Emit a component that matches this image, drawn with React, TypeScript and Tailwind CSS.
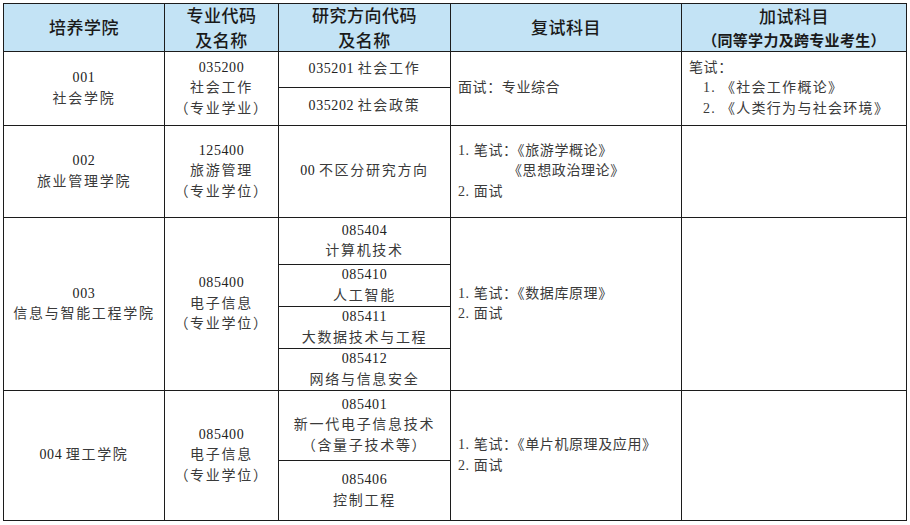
import type { ReactNode } from 'react';

const body = "font-['Liberation_Serif','Noto_Sans_CJK_SC',serif] text-[14px] leading-[20.5px] text-[#3a3a3a]";

// CJK text is letter-spaced in the source; digits are not
function Cn({ children }: { children: ReactNode }) {
  return <span className="tracking-[1.7px]">{children}</span>;
}

function Num({ children }: { children: ReactNode }) {
  return <span className="tracking-[0.6px] text-[#222]">{children}</span>;
}

function Head({ children }: { children: ReactNode }) {
  return (
    <div className="bg-[#c3e3f5] flex flex-col items-center justify-center text-[17px] leading-[24.6px] tracking-[0.5px] font-medium text-[#1a1a1a] font-['Noto_Sans_CJK_SC',sans-serif]">
      {children}
    </div>
  );
}

function Center({ children, className = '' }: { children: ReactNode; className?: string }) {
  return (
    <div className={`bg-white flex flex-col items-center justify-center text-center ${body} ${className}`}>
      {children}
    </div>
  );
}

function Left({ children }: { children: ReactNode }) {
  return <div className={`bg-white flex flex-col justify-center pl-[7px] ${body}`}>{children}</div>;
}

export default function App() {
  return (
    <div className="w-[910px] h-[525px] bg-white pt-[3px] pl-[3px]">
      <div className="w-[904px] grid grid-cols-[160px_113px_171px_230px_224px] grid-rows-[47px_73px_91px_172px_129px] gap-px p-px bg-[#1c1c1c]">
        {/* header */}
        <Head>培养学院</Head>
        <Head>
          <span>专业代码</span>
          <span>及名称</span>
        </Head>
        <Head>
          <span>研究方向代码</span>
          <span>及名称</span>
        </Head>
        <Head>复试科目</Head>
        <Head>
          <span>加试科目</span>
          <span className="text-[15px] font-bold leading-[21.5px] tracking-[0.3px]">（同等学力及跨专业考生）</span>
        </Head>

        {/* 001 */}
        <Center>
          <Num>001</Num>
          <Cn>社会学院</Cn>
        </Center>
        <Center>
          <Num>035200</Num>
          <Cn>社会工作</Cn>
          <Cn>（专业学业）</Cn>
        </Center>
        <div className="flex flex-col gap-px">
          <Center className="h-[35px]">
            <div>
              <Num>035201</Num> <Cn>社会工作</Cn>
            </div>
          </Center>
          <Center className="flex-1">
            <div>
              <Num>035202</Num> <Cn>社会政策</Cn>
            </div>
          </Center>
        </div>
        <Left>
          <span className="tracking-[0.6px]">面试：专业综合</span>
        </Left>
        <Left>
          <span className="tracking-[0.6px]">笔试：</span>
          <span className="pl-[14px] tracking-[1.3px]">1. 《社会工作概论》</span>
          <span className="pl-[14px] tracking-[1.3px]">2. 《人类行为与社会环境》</span>
        </Left>

        {/* 002 */}
        <Center>
          <Num>002</Num>
          <Cn>旅业管理学院</Cn>
        </Center>
        <Center>
          <Num>125400</Num>
          <Cn>旅游管理</Cn>
          <Cn>（专业学位）</Cn>
        </Center>
        <Center>
          <div>
            <Num>00</Num> <Cn>不区分研究方向</Cn>
          </div>
        </Center>
        <Left>
          <span className="tracking-[0.6px]">1. 笔试：《旅游学概论》</span>
          <span className="pl-[50px] tracking-[0.6px]">《思想政治理论》</span>
          <span className="tracking-[0.6px]">2. 面试</span>
        </Left>
        <div className="bg-white" />

        {/* 003 */}
        <Center>
          <Num>003</Num>
          <Cn>信息与智能工程学院</Cn>
        </Center>
        <Center>
          <Num>085400</Num>
          <Cn>电子信息</Cn>
          <Cn>（专业学位）</Cn>
        </Center>
        <div className="flex flex-col gap-px">
          <Center className="h-[46px]">
            <Num>085404</Num>
            <Cn>计算机技术</Cn>
          </Center>
          <Center className="h-[41px]">
            <Num>085410</Num>
            <Cn>人工智能</Cn>
          </Center>
          <Center className="h-[41px]">
            <Num>085411</Num>
            <Cn>大数据技术与工程</Cn>
          </Center>
          <Center className="flex-1">
            <Num>085412</Num>
            <Cn>网络与信息安全</Cn>
          </Center>
        </div>
        <Left>
          <span className="tracking-[0.6px]">1. 笔试：《数据库原理》</span>
          <span className="tracking-[0.6px]">2. 面试</span>
        </Left>
        <div className="bg-white" />

        {/* 004 */}
        <Center>
          <div>
            <Num>004</Num> <Cn>理工学院</Cn>
          </div>
        </Center>
        <Center>
          <Num>085400</Num>
          <Cn>电子信息</Cn>
          <Cn>（专业学位）</Cn>
        </Center>
        <div className="flex flex-col gap-px">
          <Center className="h-[69px]">
            <Num>085401</Num>
            <Cn>新一代电子信息技术</Cn>
            <Cn>（含量子技术等）</Cn>
          </Center>
          <Center className="flex-1">
            <Num>085406</Num>
            <Cn>控制工程</Cn>
          </Center>
        </div>
        <Left>
          <span className="tracking-[0.6px]">1. 笔试：《单片机原理及应用》</span>
          <span className="tracking-[0.6px]">2. 面试</span>
        </Left>
        <div className="bg-white" />
      </div>
    </div>
  );
}
